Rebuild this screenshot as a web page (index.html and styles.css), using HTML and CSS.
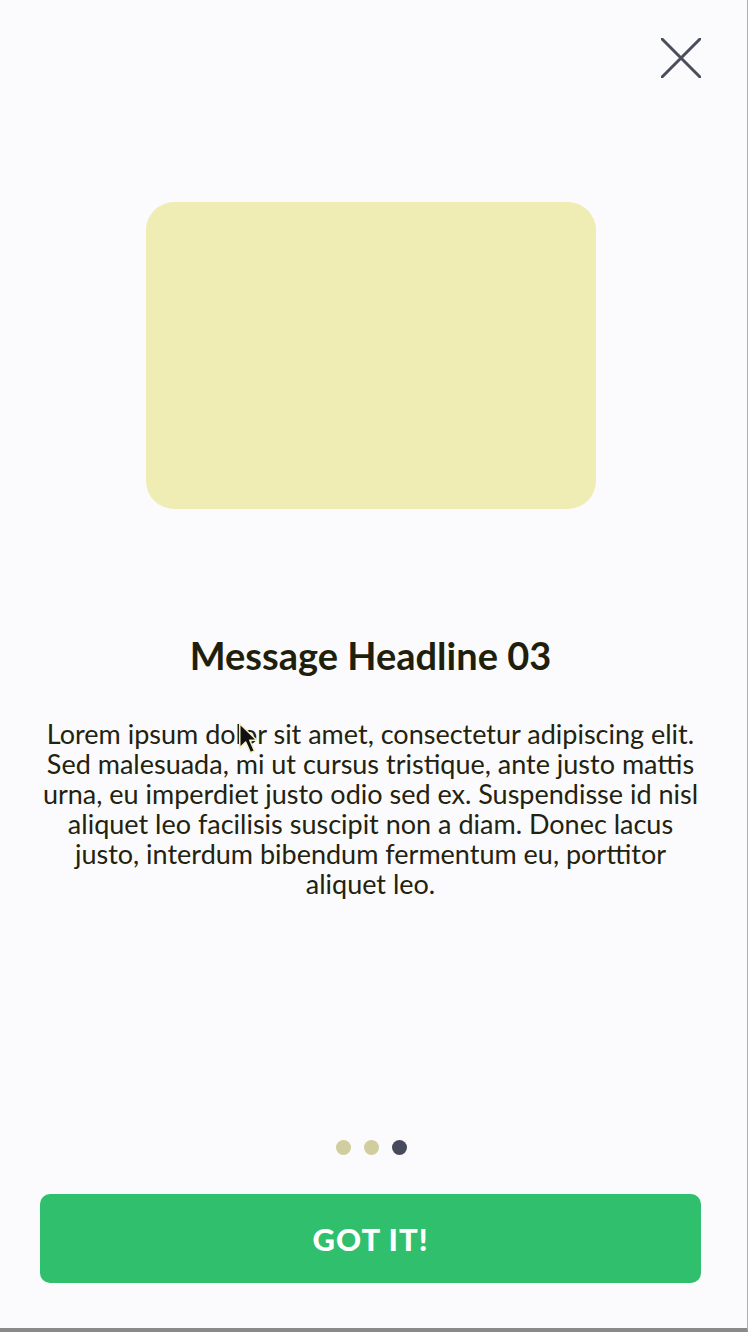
FILE: index.html
```html
<!DOCTYPE html>
<html lang="en">
<head>
<meta charset="utf-8">
<title>Message Headline 03</title>
<link rel="stylesheet" href="styles.css">
</head>
<body>
<div class="screen">
  <div class="topbar">
    <button class="close" aria-label="Close">
      <svg viewBox="0 0 40 40" width="40" height="40">
        <path d="M1 1 L39 39 M39 1 L1 39" stroke="#4a4e5a" stroke-width="3" stroke-linecap="round" fill="none"/>
      </svg>
    </button>
  </div>
  <div class="hero"></div>
  <h1 class="title">Message Headline 03</h1>
  <p class="body">Lorem ipsum dolor sit amet, consectetur adipiscing elit.<br>Sed malesuada, mi ut cursus tristique, ante justo mattis<br>urna, eu imperdiet justo odio sed ex. Suspendisse id nisl<br>aliquet leo facilisis suscipit non a diam. Donec lacus<br>justo, interdum bibendum fermentum eu, porttitor<br>aliquet leo.</p>
  <div class="dots">
    <span class="dot"></span>
    <span class="dot"></span>
    <span class="dot active"></span>
  </div>
  <button class="cta">GOT IT!</button>
  <svg class="cursor" viewBox="0 0 17 28" width="20" height="33">
    <path d="M1.5 1.5 L1.5 22 L6.5 17 L10.5 26 L14 24.5 L10 15.5 L16 15.5 Z" fill="#111" stroke="#f1efc4" stroke-width="1.3" stroke-linejoin="round"/>
  </svg>
</div>
</body>
</html>
```
FILE: styles.css
```css
html, body {
  margin: 0;
  padding: 0;
  background: #fbfbfe;
}
.screen {
  position: relative;
  box-sizing: border-box;
  width: 748px;
  height: 1332px;
  padding: 0 46px 45px 40px;
  border-bottom: 4px solid #8a8a8c;
  border-right: 1px solid #b0b0b4;
  display: flex;
  flex-direction: column;
  font-family: Lato, "Noto Sans", sans-serif;
  color: #22220f;
}
.topbar {
  display: flex;
  justify-content: flex-end;
  padding-top: 38px;
}
.close {
  width: 40px;
  height: 40px;
  padding: 0;
  border: 0;
  background: none;
  display: block;
}
.close svg { display: block; }
.hero {
  align-self: center;
  margin-top: 124px;
  width: 450px;
  height: 307px;
  border-radius: 28px;
  background: #efedb3;
}
.title {
  margin: 123px 0 0;
  text-align: center;
  font-size: 38px;
  line-height: 46px;
  font-weight: 700;
  color: #1f1f0c;
}
.body {
  margin: 41px -20px 0;
  text-align: center;
  font-size: 27px;
  line-height: 30px;
  font-weight: 400;
  color: #22220f;
}
.dots {
  margin-top: auto;
  display: flex;
  justify-content: center;
  gap: 13px;
  padding-left: 2px;
}
.dot {
  width: 15px;
  height: 15px;
  border-radius: 50%;
  background: #d0cd9e;
}
.dot.active { background: #474a5a; }
.cta {
  margin-top: 39px;
  height: 89px;
  border: 0;
  border-radius: 10px;
  background: #30bf6c;
  color: #fff;
  font-family: Lato, "Noto Sans", sans-serif;
  font-weight: 900;
  font-size: 31px;
  letter-spacing: 1px;
}
.cursor {
  position: absolute;
  left: 238px;
  top: 722px;
}
```
